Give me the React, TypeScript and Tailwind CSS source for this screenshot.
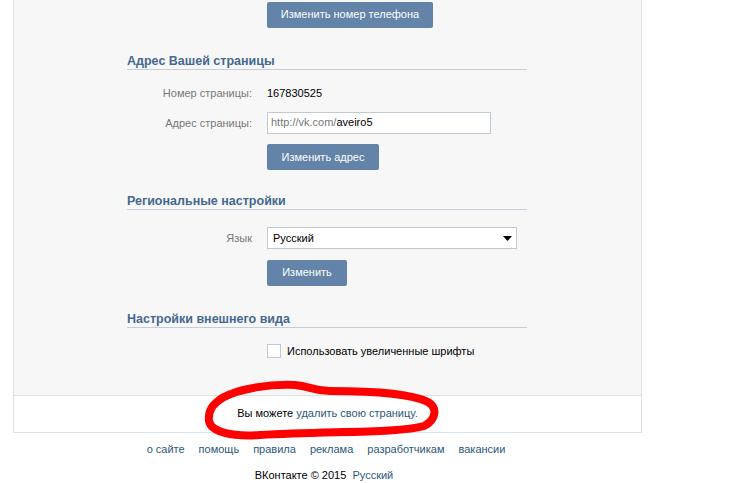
import React from "react";

const font = { fontFamily: '"Liberation Sans", Arial, sans-serif' };

type FormButtonProps = {
  label: string;
  width: string;
};

const FormButton = ({ label, width }: FormButtonProps) => (
  <button
    type="button"
    className={`${width} h-[26px] rounded-[2px] bg-[#6383a8] text-[11px] text-white leading-none`}
  >
    {label}
  </button>
);

const SectionHeader = ({ title, className }: { title: string; className: string }) => (
  <div
    className={`${className} w-[400px] border-b border-[#c5cdd8] text-[12.5px] font-bold leading-[16px] text-[#45688e]`}
  >
    {title}
  </div>
);

type RowProps = {
  label: string;
  className?: string;
  children: React.ReactNode;
};

const Row = ({ label, className, children }: RowProps) => (
  <div className={`flex items-center ${className ?? ""}`}>
    <div className="w-[125px] text-right text-[11px] leading-[16px] text-[#777]">{label}</div>
    <div className="ml-[15px] flex">{children}</div>
  </div>
);

const footerLinks = ["о сайте", "помощь", "правила", "реклама", "разработчикам", "вакансии"];

export default function App() {
  return (
    <div className="relative w-[740px] h-[483px] overflow-hidden bg-white" style={font}>
      <div className="ml-[13px] w-[629px] border-x border-b border-[#dae1e8]">
        <div className="bg-[#f7f7f7] pl-[113px] pt-px pb-[36px]">
          <div className="pl-[140px]">
            <FormButton label="Изменить номер телефона" width="w-[166px]" />
          </div>

          {/* адрес страницы */}
          <SectionHeader title="Адрес Вашей страницы" className="mt-[25px]" />
          <Row label="Номер страницы:" className="mt-[15px] h-[16px]">
            <span className="text-[11px] leading-[16px] text-black">167830525</span>
          </Row>
          <Row label="Адрес страницы:" className="mt-[11px]">
            <div className="flex h-[22px] w-[224px] items-center border border-[#c0cad5] bg-white pl-[3px] text-[11px]">
              <span className="text-[#777]">http://vk.com/</span>
              <span className="text-black">aveiro5</span>
            </div>
          </Row>
          <div className="mt-[10px] pl-[140px]">
            <FormButton label="Изменить адрес" width="w-[112px]" />
          </div>

          {/* региональные */}
          <SectionHeader title="Региональные настройки" className="mt-[23px]" />
          <Row label="Язык" className="mt-[17px]">
            <div className="flex h-[22px] w-[250px] items-center justify-between border border-[#c0cad5] bg-white pl-[5px] pr-[4px] text-[11px] text-black">
              <span>Русский</span>
              <svg width="9" height="5" viewBox="0 0 9 5">
                <path d="M0 0 L9 0 L4.5 5 Z" fill="#000" />
              </svg>
            </div>
          </Row>
          <div className="mt-[10px] pl-[140px]">
            <FormButton label="Изменить" width="w-[80px]" />
          </div>

          {/* внешний вид */}
          <SectionHeader title="Настройки внешнего вида" className="mt-[25px]" />
          <div className="mt-[15px] flex h-[16px] items-center pl-[140px]">
            <div className="h-[14px] w-[14px] border border-[#c0cad5] bg-white" />
            <span className="ml-[6px] text-[11px] leading-[16px] text-black">
              Использовать увеличенные шрифты
            </span>
          </div>
        </div>
        <div className="flex h-[37px] items-center justify-center border-t border-[#dae1e8] bg-white text-[11px]">
          <span className="text-black">Вы можете&nbsp;</span>
          <span className="text-[#2b587a]">удалить свою страницу.</span>
        </div>
      </div>

      <div className="mt-[8px] flex justify-center gap-[14px] pr-[88px] text-[11px] leading-[16px] text-[#2b587a]">
        {footerLinks.map((link) => (
          <span key={link}>{link}</span>
        ))}
      </div>
      <div className="mt-[10px] flex justify-center pr-[92px] text-[11px] leading-[16px]">
        <span className="text-black">ВКонтакте © 2015&nbsp;&nbsp;</span>
        <span className="text-[#2b587a]">Русский</span>
      </div>

      <svg
        className="pointer-events-none absolute left-0 top-0"
        width="740"
        height="483"
        viewBox="0 0 740 483"
      >
        <path
          d="M222 398 C240 388 270 384 295 385 C310 386 312 391 330 391 C370 391 410 393 428 402 C438 408 436 420 424 426 C400 433 330 431 260 435 C232 437 211 432 209 421 C208 411 212 404 224 397"
          fill="none"
          stroke="#ff0000"
          strokeWidth="8"
          strokeLinecap="round"
          strokeLinejoin="round"
        />
      </svg>
    </div>
  );
}
